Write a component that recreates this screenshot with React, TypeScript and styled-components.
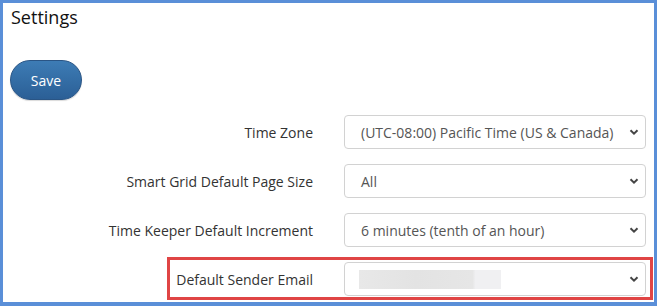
import React from "react";
import styled, { createGlobalStyle } from "styled-components";

const GlobalStyle = createGlobalStyle`
  html, body {
    margin: 0;
    padding: 0;
    background: #fff;
  }
  body {
    font-family: "Open Sans", "Liberation Sans", sans-serif;
  }
`;

const Frame = styled.div`
  width: 657px;
  height: 306px;
  box-sizing: border-box;
  border: 3px solid #5a8fd8;
  border-bottom-width: 4px;
  background: #fff;
  overflow: hidden;
`;

const Title = styled.h1`
  margin: 2px 0 0 8px;
  font-size: 18px;
  line-height: 24px;
  font-weight: 400;
  color: #111;
`;

const SaveButton = styled.button`
  margin: 31px 0 0 7px;
  width: 72px;
  height: 40px;
  border-radius: 20px;
  border: 1px solid #2a5585;
  background: linear-gradient(#3d7cb5, #2b5f96);
  color: #fff;
  font-family: inherit;
  font-size: 14px;
  cursor: pointer;
  box-shadow: 0 1px 1px rgba(0, 0, 0, 0.15);
`;

const Form = styled.div`
  margin-top: 15px;
  display: flex;
  flex-direction: column;
  gap: 15px;
`;

const Row = styled.div`
  position: relative;
  display: flex;
  align-items: center;
  height: 34px;
`;

const Label = styled.label`
  width: 310px;
  margin-right: 31px;
  text-align: right;
  font-size: 14px;
  color: #333;
`;

const SelectBox = styled.div`
  position: relative;
  width: 302px;
  height: 34px;
  box-sizing: border-box;
  border: 1px solid #d2d2d2;
  border-radius: 4px;
  display: flex;
  align-items: center;
  padding-left: 16px;
  font-size: 14px;
  color: #555;
`;

const Chevron = styled.svg`
  position: absolute;
  right: 6px;
  top: 50%;
  margin-top: -4px;
`;

const Blurred = styled.div`
  width: 142px;
  height: 19px;
  background: linear-gradient(90deg, #e8e8e8 0%, #e3e3e3 40%, #e6e6e6 80%, #f0f0f2 82%, #f0f0f2 100%);
  filter: blur(0.6px);
  margin-left: -2px;
`;

const Highlight = styled.div`
  position: absolute;
  left: 164px;
  top: -5px;
  width: 486px;
  height: 43px;
  box-sizing: border-box;
  border: 3px solid #e04545;
  pointer-events: none;
`;

const Select: React.FC<{ children: React.ReactNode }> = ({ children }) => (
  <SelectBox>
    {children}
    <Chevron width="10" height="8" viewBox="0 0 10 8">
      <path d="M1.5 2.2 L5 5.6 L8.5 2.2" fill="none" stroke="#444" strokeWidth="2" />
    </Chevron>
  </SelectBox>
);

const ROWS = [
  { label: "Time Zone", value: "(UTC-08:00) Pacific Time (US & Canada)" },
  { label: "Smart Grid Default Page Size", value: "All" },
  { label: "Time Keeper Default Increment", value: "6 minutes (tenth of an hour)" },
];

export default function App() {
  return (
    <>
      <GlobalStyle />
      <Frame>
        <Title>Settings</Title>
        <SaveButton>Save</SaveButton>
        <Form>
          {ROWS.map((r) => (
            <Row key={r.label}>
              <Label>{r.label}</Label>
              <Select>{r.value}</Select>
            </Row>
          ))}
          <Row>
            <Label>Default Sender Email</Label>
            <Select>
              <Blurred />
            </Select>
            <Highlight />
          </Row>
        </Form>
      </Frame>
    </>
  );
}
